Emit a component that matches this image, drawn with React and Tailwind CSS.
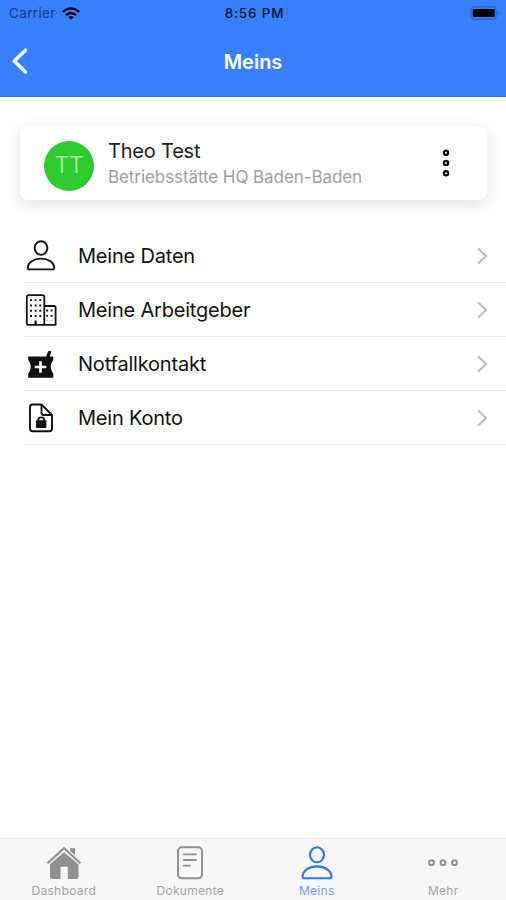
import React, { useState } from 'react'

const PersonIcon = ({ className }) => (
  <svg className={className} viewBox="0 0 32 34" fill="none" stroke="currentColor" strokeWidth="2.1" strokeLinejoin="round">
    <ellipse cx="16" cy="8.8" rx="7" ry="7.5" />
    <path d="M1.5 30.7C1.5 24.6 8 20.4 16 20.4S30.5 24.6 30.5 30.7C30.5 31.6 30 32.2 29.1 32.2H2.9C2 32.2 1.5 31.6 1.5 30.7Z" />
  </svg>
)

const BuildingIcon = ({ className }) => (
  <svg className={className} viewBox="0 0 32 32" fill="none" stroke="currentColor" strokeWidth="1.8" strokeLinejoin="round">
    <path d="M1.8 29.5V3.2Q1.8 1.2 3.8 1.2H17.5Q19.3 1.2 19.3 3.2V30.8H2.4Z" />
    <path d="M19.3 12H29Q30.6 12 30.6 13.6V30.8H19.3" />
    <path d="M6 5.2V25.5M10.6 5.2V25.5M15.2 5.2V25.5" strokeWidth="1.9" strokeDasharray="1.9 3.4" />
    <path d="M22.2 15.6V26.4M26.6 15.6V26.4" strokeWidth="1.9" strokeDasharray="1.9 3.4" />
    <path d="M10.6 26.5V30.8" strokeWidth="2.2" />
  </svg>
)

const MortarIcon = ({ className }) => (
  <svg className={className} viewBox="0 0 28 28" fill="currentColor">
    <path d="M1.2 6.4H19.2L21 1.4Q21.2 .9 21.8 1L24 1.3Q24.4 1.5 24.2 2L22.8 6.4H25.8Q26.3 6.4 26.3 7V10C24.6 12.2 23.8 14.6 23.8 16.6C23.8 19.2 24.6 21.6 26.3 23.6V27.2Q26.3 27.8 25.7 27.8H1.8Q1.2 27.8 1.2 27.2V23.6C2.9 21.6 3.7 19.2 3.7 16.6C3.7 14.6 2.9 12.2 1.2 10Z" />
    <path d="M13.5 11.2V22.8M7.7 17H19.3" stroke="white" strokeWidth="2.7" />
  </svg>
)

const FileLockIcon = ({ className }) => (
  <svg className={className} viewBox="0 0 26 30" fill="none" stroke="currentColor" strokeWidth="1.9" strokeLinejoin="round">
    <path d="M13.5 1.5H4.5Q2 1.5 2 4V25.5Q2 28.2 4.5 28.2H21.5Q24 28.2 24 25.5V12L13.5 1.5V9.7Q13.5 12 15.8 12H24" />
    <rect x="8" y="17.2" width="10.4" height="7.8" rx="1" fill="currentColor" stroke="none" />
    <path d="M10.4 18V16.6Q10.4 14.4 13.2 14.4T16 16.6V18" />
  </svg>
)

const HomeIcon = ({ className }) => (
  <svg className={className} viewBox="0 0 36 34" fill="currentColor">
    <path d="M24 2.3H29V11.2L24 6.5Z" />
    <path d="M18 6.2L32.5 18V31Q32.5 33 30.5 33H21.8V20.8H14.5V33H6Q4 33 4 31V18Z" />
    <path d="M1.5 17.2L18 2.2L34.5 17.2" fill="none" stroke="#f7f7f7" strokeWidth="4.4" />
    <path d="M1.5 17.2L18 2.2L34.5 17.2" fill="none" stroke="currentColor" strokeWidth="2.2" />
  </svg>
)

const DocumentIcon = ({ className }) => (
  <svg className={className} viewBox="0 0 28 34" fill="none" stroke="currentColor" strokeWidth="2" strokeLinecap="round">
    <rect x="2" y="1.3" width="24" height="31" rx="3.8" />
    <path d="M7.7 8.4H20M7.7 14H20M7.7 19.6H14" strokeWidth="1.8" />
  </svg>
)

const MoreIcon = ({ className }) => (
  <svg className={className} viewBox="0 0 32 34" fill="none" stroke="currentColor" strokeWidth="2">
    <circle cx="4.5" cy="16.7" r="2.4" />
    <circle cx="16" cy="16.7" r="2.4" />
    <circle cx="27.5" cy="16.7" r="2.4" />
  </svg>
)

const WifiIcon = () => (
  <svg className="w-[18px] h-[13px]" viewBox="0 0 18 13" fill="none" stroke="black" strokeWidth="2.3">
    <path d="M.8 4.9Q9-2.2 17.2 4.9" />
    <path d="M3.9 8.2Q9 3.7 14.1 8.2" />
    <path d="M9 12.8L6.3 10.1Q9 8 11.7 10.1Z" fill="black" stroke="none" />
  </svg>
)

const BatteryIcon = () => (
  <svg className="w-[30px] h-[14px]" viewBox="0 0 30 14">
    <rect x=".8" y=".8" width="25.4" height="12.4" rx="3.4" fill="none" stroke="#2f66cc" strokeWidth="1.5" />
    <rect x="2.7" y="2.9" width="22" height="8.2" rx="1" fill="black" />
    <path d="M27.6 4.7Q29.4 5.5 29.4 7T27.6 9.3Z" fill="#2f66cc" />
  </svg>
)

const menuItems = [
  { label: 'Meine Daten', icon: PersonIcon, iconClass: 'w-[30px] h-[31px]' },
  { label: 'Meine Arbeitgeber', icon: BuildingIcon, iconClass: 'w-8 h-8' },
  { label: 'Notfallkontakt', icon: MortarIcon, iconClass: 'w-7 h-7 mt-px' },
  { label: 'Mein Konto', icon: FileLockIcon, iconClass: 'w-[26px] h-[30px]' },
]

const tabs = [
  { label: 'Dashboard', icon: HomeIcon, iconClass: 'w-9 h-[34px]' },
  { label: 'Dokumente', icon: DocumentIcon, iconClass: 'w-7 h-[34px]' },
  { label: 'Meins', icon: PersonIcon, iconClass: 'w-8 h-[34px]' },
  { label: 'Mehr', icon: MoreIcon, iconClass: 'w-8 h-[34px]' },
]

const App = () => {
  const [activeTab, setActiveTab] = useState('Meins')

  return (
    <div className="w-full h-[900px] flex flex-col bg-white overflow-hidden font-[Inter,sans-serif]">
      <header className="h-[97px] shrink-0 bg-[#387fff] border-b border-[#3272e6]">
        <div className="h-[26px] grid grid-cols-3 items-center pl-[9px] pr-[6px] text-[13.5px] text-[#07152e]">
          <div className="flex items-center gap-[6px]">
            <span className="pt-px text-[#1b3c78] tracking-[0.35px]">Carrier</span>
            <WifiIcon />
          </div>
          <span className="pt-px text-center font-medium tracking-[0.8px]">8:56 PM</span>
          <div className="flex justify-end">
            <BatteryIcon />
          </div>
        </div>
        <div className="h-[70px] grid grid-cols-3 items-center text-white">
          <button className="pl-[11px]" aria-label="Zurück">
            <svg className="w-[18px] h-7" viewBox="0 0 18 28" fill="none" stroke="currentColor" strokeWidth="3.5" strokeLinecap="round" strokeLinejoin="round">
              <path d="M14.5 3.2L3.2 14L14.5 25" />
            </svg>
          </button>
          <h1 className="pt-px text-center text-xl font-semibold">Meins</h1>
        </div>
      </header>

      <main className="grow">
        <div className="mt-[29px] ml-5 mr-[19px] h-[74px] pl-[24px] pr-9 flex items-center rounded-lg bg-white shadow-[0_4px_16px_rgba(0,0,0,0.13)]">
          <div className="w-[50px] h-[50px] mt-[5px] rounded-full bg-[#2dcb2d] text-[#bdf0bd] flex items-center justify-center text-[23px] font-light">TT</div>
          <div className="ml-[14px] pt-px grow">
            <p className="text-xl leading-[26px] tracking-[-0.2px] text-[#222]">Theo Test</p>
            <p className="text-[17px] leading-[26px] tracking-[-0.08px] text-[#a0a0a0]">Betriebsstätte HQ Baden-Baden</p>
          </div>
          <button aria-label="Optionen">
            <svg className="w-[10px] h-[30px]" viewBox="0 0 10 30" fill="none" stroke="black" strokeWidth="2.2">
              <circle cx="5" cy="4.7" r="2.1" />
              <circle cx="5" cy="15" r="2.1" />
              <circle cx="5" cy="25.3" r="2.1" />
            </svg>
          </button>
        </div>

        <ul className="mt-[29px] ml-[25px]">
          {menuItems.map(({ label, icon: Icon, iconClass }) => (
            <li key={label} className="h-[54px] flex items-center border-b border-[#e9e9e9] text-[#111]">
              <div className="w-8 flex justify-center">
                <Icon className={iconClass} />
              </div>
              <span className="ml-[21px] grow text-xl tracking-[-0.2px]">{label}</span>
              <svg className="w-[14px] h-5 mr-[17px]" viewBox="0 0 14 20" fill="none" stroke="#bdbdbd" strokeWidth="2.2">
                <path d="M3 2.3L11 10L3 17.7" />
              </svg>
            </li>
          ))}
        </ul>
      </main>

      <nav className="h-[62px] shrink-0 grid grid-cols-4 bg-[#f7f7f7] border-t border-[#ececec]">
        {tabs.map(({ label, icon: Icon, iconClass }) => (
          <button
            key={label}
            onClick={() => setActiveTab(label)}
            className="flex flex-col items-center pt-[7px] pl-px"
          >
            <Icon className={`${iconClass} ${activeTab === label ? 'text-[#2d74f5]' : 'text-[#909090]'}`} />
            <span className={`mt-[3px] text-xs leading-4 tracking-[0.3px] ${activeTab === label ? 'text-[#7398ff]' : 'text-[#a3a3a3]'}`}>
              {label}
            </span>
          </button>
        ))}
      </nav>
    </div>
  )
}

export default App
